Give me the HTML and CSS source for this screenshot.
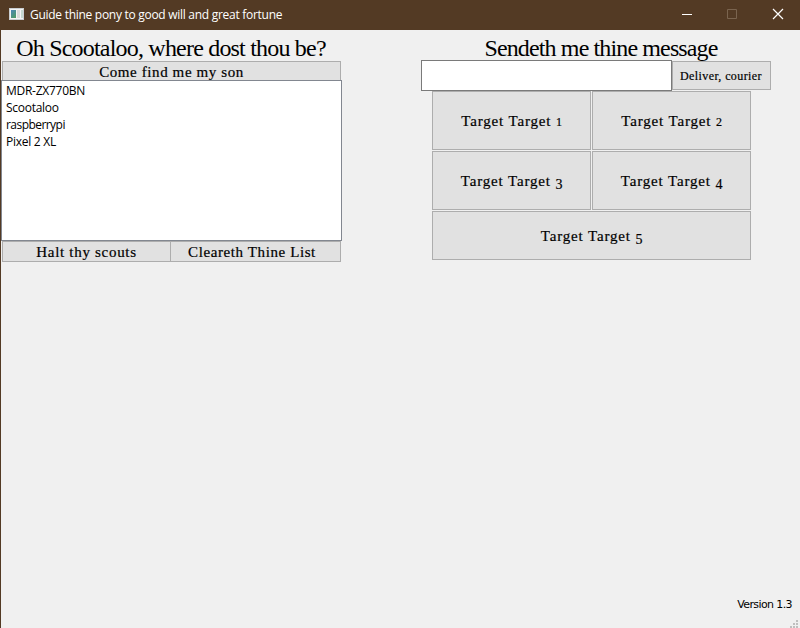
FILE: index.html
```html
<!DOCTYPE html>
<html lang="en">
<head>
<meta charset="utf-8">
<title>Guide thine pony to good will and great fortune</title>
<link rel="stylesheet" href="styles.css">
</head>
<body>
<div class="window">
  <header class="titlebar">
    <svg class="app-icon" width="15" height="12" viewBox="0 0 15 12">
      <defs><linearGradient id="screen" x2="0.6" y2="1"><stop stop-color="#4b86b8"/><stop offset="1" stop-color="#4e9a6a"/></linearGradient></defs>
      <path fill="#c9cdd0" d="M0 0h15v12H0z"/><path fill="#f4f4f4" d="M1 1h13v10H1z"/>
      <path fill="url(#screen)" d="M2 2h5v8H2z"/><path fill="#dadada" d="M8 2h3v8H8z"/><path fill="#c5d8cf" d="M12 2h2v8h-2z"/>
    </svg>
    <span class="title">Guide thine pony to good will and great fortune</span>
    <svg class="controls" width="138" height="30" viewBox="0 0 138 30" fill="none">
      <path stroke="#fff" d="M20 14.500h10"/>
      <path stroke="#7a644f" d="M65.500 9.500h9v9h-9z"/>
      <path stroke="#fff" stroke-width="1.200" d="M111 9l10 10M121 9l-10 10"/>
    </svg>
  </header>
  <main class="content">
    <section class="finder">
      <h1 class="heading">Oh Scootaloo, where dost thou be?</h1>
      <button class="btn find">Come find me my son</button>
      <ul class="devices">
        <li>MDR-ZX770BN</li>
        <li>Scootaloo</li>
        <li class="tight">raspberrypi</li>
        <li>Pixel 2 XL</li>
      </ul>
      <div class="actions">
        <button class="btn halt">Halt thy scouts</button>
        <button class="btn clear">Cleareth Thine List</button>
      </div>
    </section>
    <section class="sender">
      <h1 class="heading">Sendeth me thine message</h1>
      <div class="message">
        <input class="field" type="text" aria-label="Message">
        <button class="btn deliver">Deliver, courier</button>
      </div>
      <div class="targets">
        <button class="btn"><span>Target Target <span class="num">1</span></span></button>
        <button class="btn"><span>Target Target <span class="num">2</span></span></button>
        <button class="btn"><span>Target Target <span class="num low">3</span></span></button>
        <button class="btn"><span>Target Target <span class="num low">4</span></span></button>
        <button class="btn wide"><span>Target Target <span class="num low">5</span></span></button>
      </div>
    </section>
  </main>
  <footer class="status">
    <span class="version">Version 1.3</span>
    <svg class="grip" width="8" height="8" viewBox="0 0 8 8"><path fill="#bfbfbf" d="M6 0h2v2H6zM3 3h2v2H3zM6 3h2v2H6zM0 6h2v2H0zM3 6h2v2H3zM6 6h2v2H6z"/></svg>
  </footer>
</div>
</body>
</html>
```

FILE: styles.css
```css
* { box-sizing: border-box; }
body { margin: 0; background: #f0f0f0; color: #000; }
.window {
  width: 800px; height: 628px; display: flex; flex-direction: column;
  border-left: 1px solid #533a24; background: #f0f0f0; overflow: hidden;
}
.titlebar {
  height: 30px; flex: none; display: flex; align-items: center;
  padding-left: 8px; background: #533a24; color: #fff;
  font: 12px/16px "Open Sans", sans-serif;
}
.app-icon { margin: 0 6px 2px 0; }
.title { white-space: nowrap; letter-spacing: -0.28px; }
.controls { margin-left: auto; }
.content { flex: 1; display: flex; gap: 79px; align-items: flex-start; }
.finder { width: 341px; }
.sender { width: 350px; }
.heading {
  margin: 0; padding-top: 4px; text-align: center; white-space: nowrap;
  font: 24px/28px "Liberation Serif", serif;
}
.finder .heading { height: 31px; letter-spacing: -0.8px; padding-right: 1px; }
.sender .heading { height: 30px; letter-spacing: -0.87px; padding-left: 10px; }
.btn {
  border: 1px solid #adadad; background: #e1e1e1; color: #000; padding: 0; margin: 0;
  font: 15px/18px "Liberation Serif", serif; letter-spacing: 0.6px;
  white-space: nowrap; border-radius: 0; -webkit-text-stroke: 0.2px #000;
  display: flex; align-items: center; justify-content: center;
}
.find { width: 339px; height: 19px; margin-left: 1px; border-bottom: 0; padding-top: 2px; }
.devices {
  list-style: none; margin: 0; height: 161px; padding: 1px 4px; background: #fff;
  border: 1px solid #828790; font: 12px/17px "Open Sans", sans-serif; letter-spacing: -0.27px;
}
.tight { letter-spacing: -0.55px; }
.actions { display: grid; grid-template-columns: 169px 171px; margin: 0 1px; }
.actions .btn { height: 21px; padding-top: 1px; }
.halt { letter-spacing: 0.7px; }
.actions .clear { margin: 0 1px 0 -1px; padding-right: 7px; }
.message { display: flex; align-items: center; }
.field { width: 251px; height: 31px; border: 1px solid #7a7a7a; background: #fff; padding: 4px; border-radius: 0; }
.deliver { width: 99px; height: 29px; font-size: 12px; letter-spacing: 0.4px; padding: 1px 1px 0 0; }
.targets {
  display: grid; grid-template-columns: 159px 159px; grid-template-rows: 59px 59px 49px;
  gap: 1px; margin-left: 11px;
}
.targets .btn { padding: 0 0 0 1px; letter-spacing: 0.85px; }
.wide { grid-column: span 2; }
.num { font-size: 12px; line-height: 1; }
.low { font-size: 14px; position: relative; top: 3px; }
.status { display: flex; flex-direction: column; align-items: flex-end; height: 33px; }
.version { margin: 2px 8px 0 0; font: 11px/16px "DejaVu Sans", sans-serif; letter-spacing: -0.6px; }
.grip { margin: auto 2px 0 0; }
```
